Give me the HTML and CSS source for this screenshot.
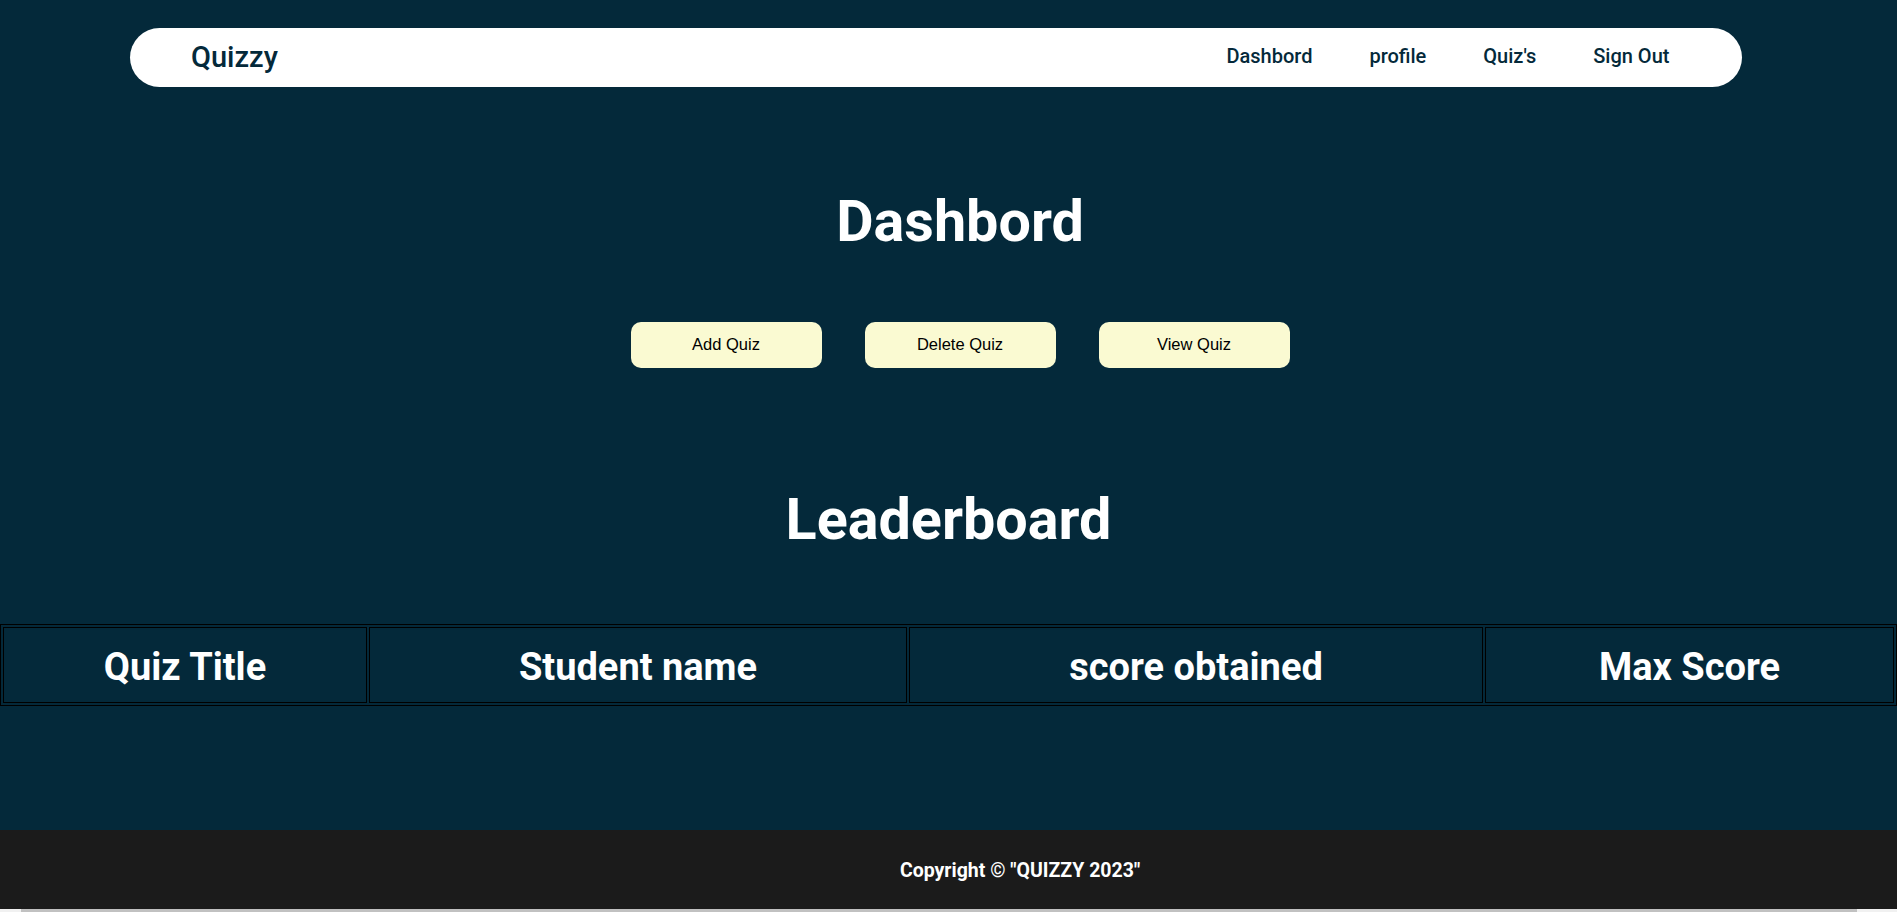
FILE: index.html
```html
<!DOCTYPE html>
<html lang="en">
<head>
<meta charset="UTF-8">
<title>Quizzy - Dashbord</title>
<link rel="stylesheet" href="styles.css">
</head>
<body>
<div class="page">
  <nav class="navbar">
    <div class="logo">Quizzy</div>
    <ul class="nav-links">
      <li><a href="#">Dashbord</a></li>
      <li><a href="#">profile</a></li>
      <li><a href="#">Quiz's</a></li>
      <li><a href="#">Sign Out</a></li>
    </ul>
  </nav>

  <section class="dashboard">
    <h1 class="title title-dashboard">Dashbord</h1>
    <div class="actions">
      <button class="btn">Add Quiz</button>
      <button class="btn">Delete Quiz</button>
      <button class="btn">View Quiz</button>
    </div>
  </section>

  <section class="leaderboard">
    <h1 class="title title-leaderboard">Leaderboard</h1>
    <table class="board">
      <thead>
        <tr>
          <th class="col-title">Quiz Title</th>
          <th class="col-student">Student name</th>
          <th class="col-score">score obtained</th>
          <th class="col-max">Max Score</th>
        </tr>
      </thead>
      <tbody></tbody>
    </table>
  </section>
</div>

<footer class="footer">
  <p class="copyright">Copyright © "QUIZZY 2023"</p>
</footer>
<div class="scroll-strip"><div class="scroll-thumb"></div></div>
</body>
</html>
```

FILE: styles.css
```css
html, body {
  margin: 0;
  padding: 0;
}

html {
  overflow: hidden;
}

body {
  background: #04293A;
  font-family: Roboto, "Noto Sans", "Liberation Sans", sans-serif;
  display: flex;
  flex-direction: column;
  min-height: 100vh;
}

.page {
  flex: 1;
}

/* Navbar */
.navbar {
  box-sizing: border-box;
  width: 85%;
  height: 59px;
  margin: 28px 0 0 130px;
  padding: 0 73px 0 61px;
  background: #ffffff;
  border-radius: 30px;
  display: flex;
  align-items: center;
  justify-content: space-between;
}

.logo {
  font-size: 29px;
  font-weight: 500;
  color: #04293A;
  margin-bottom: 2px;
}

.nav-links {
  list-style: none;
  margin: 0 0 4px 0;
  padding: 0;
  display: flex;
  gap: 57px;
}

.nav-links a {
  font-size: 20px;
  font-weight: 500;
  color: #04293A;
  text-decoration: none;
}

/* Titles */
.title {
  margin: 0;
  font-size: 57.5px;
  font-weight: 700;
  color: #ffffff;
  text-align: center;
}

.dashboard {
  padding-left: 23px;
}

.title-dashboard {
  margin-top: 101px;
}

.actions {
  display: flex;
  justify-content: center;
  gap: 43px;
  margin-top: 67px;
}

.btn {
  width: 191px;
  height: 46px;
  border: none;
  border-radius: 10px;
  background: #FAFAD2;
  color: #000000;
  font-family: "Liberation Sans", Arial, sans-serif;
  font-size: 16.5px;
  padding: 0 0 2px 0;
  cursor: pointer;
}

.title-leaderboard {
  margin-top: 118px;
}

/* Table */
.board {
  width: 100%;
  margin-top: 71px;
  border: 1px solid #000000;
  border-spacing: 2px;
}

.board th {
  border: 1px solid #000000;
  padding: 17px 1px 13px;
  color: #ffffff;
  font-size: 38px;
  font-weight: 700;
  text-align: center;
}

.board .col-title { width: 360px; }
.board .col-student { width: 534px; }
.board .col-score { width: 570px; }
.board .col-max { width: 405px; }

/* Footer */
.footer {
  height: 79px;
  background: #1B1B1B;
  display: flex;
  align-items: center;
  justify-content: center;
  padding-left: 143px;
}

.copyright {
  margin: 2px 0 0 0;
  color: #ffffff;
  font-size: 19.5px;
  font-weight: 700;
}

.scroll-strip {
  height: 3px;
  background: #f1f1f1;
  padding-left: 21px;
  padding-right: 40px;
}

.scroll-thumb {
  height: 100%;
  background: #c1c1c1;
}
```
